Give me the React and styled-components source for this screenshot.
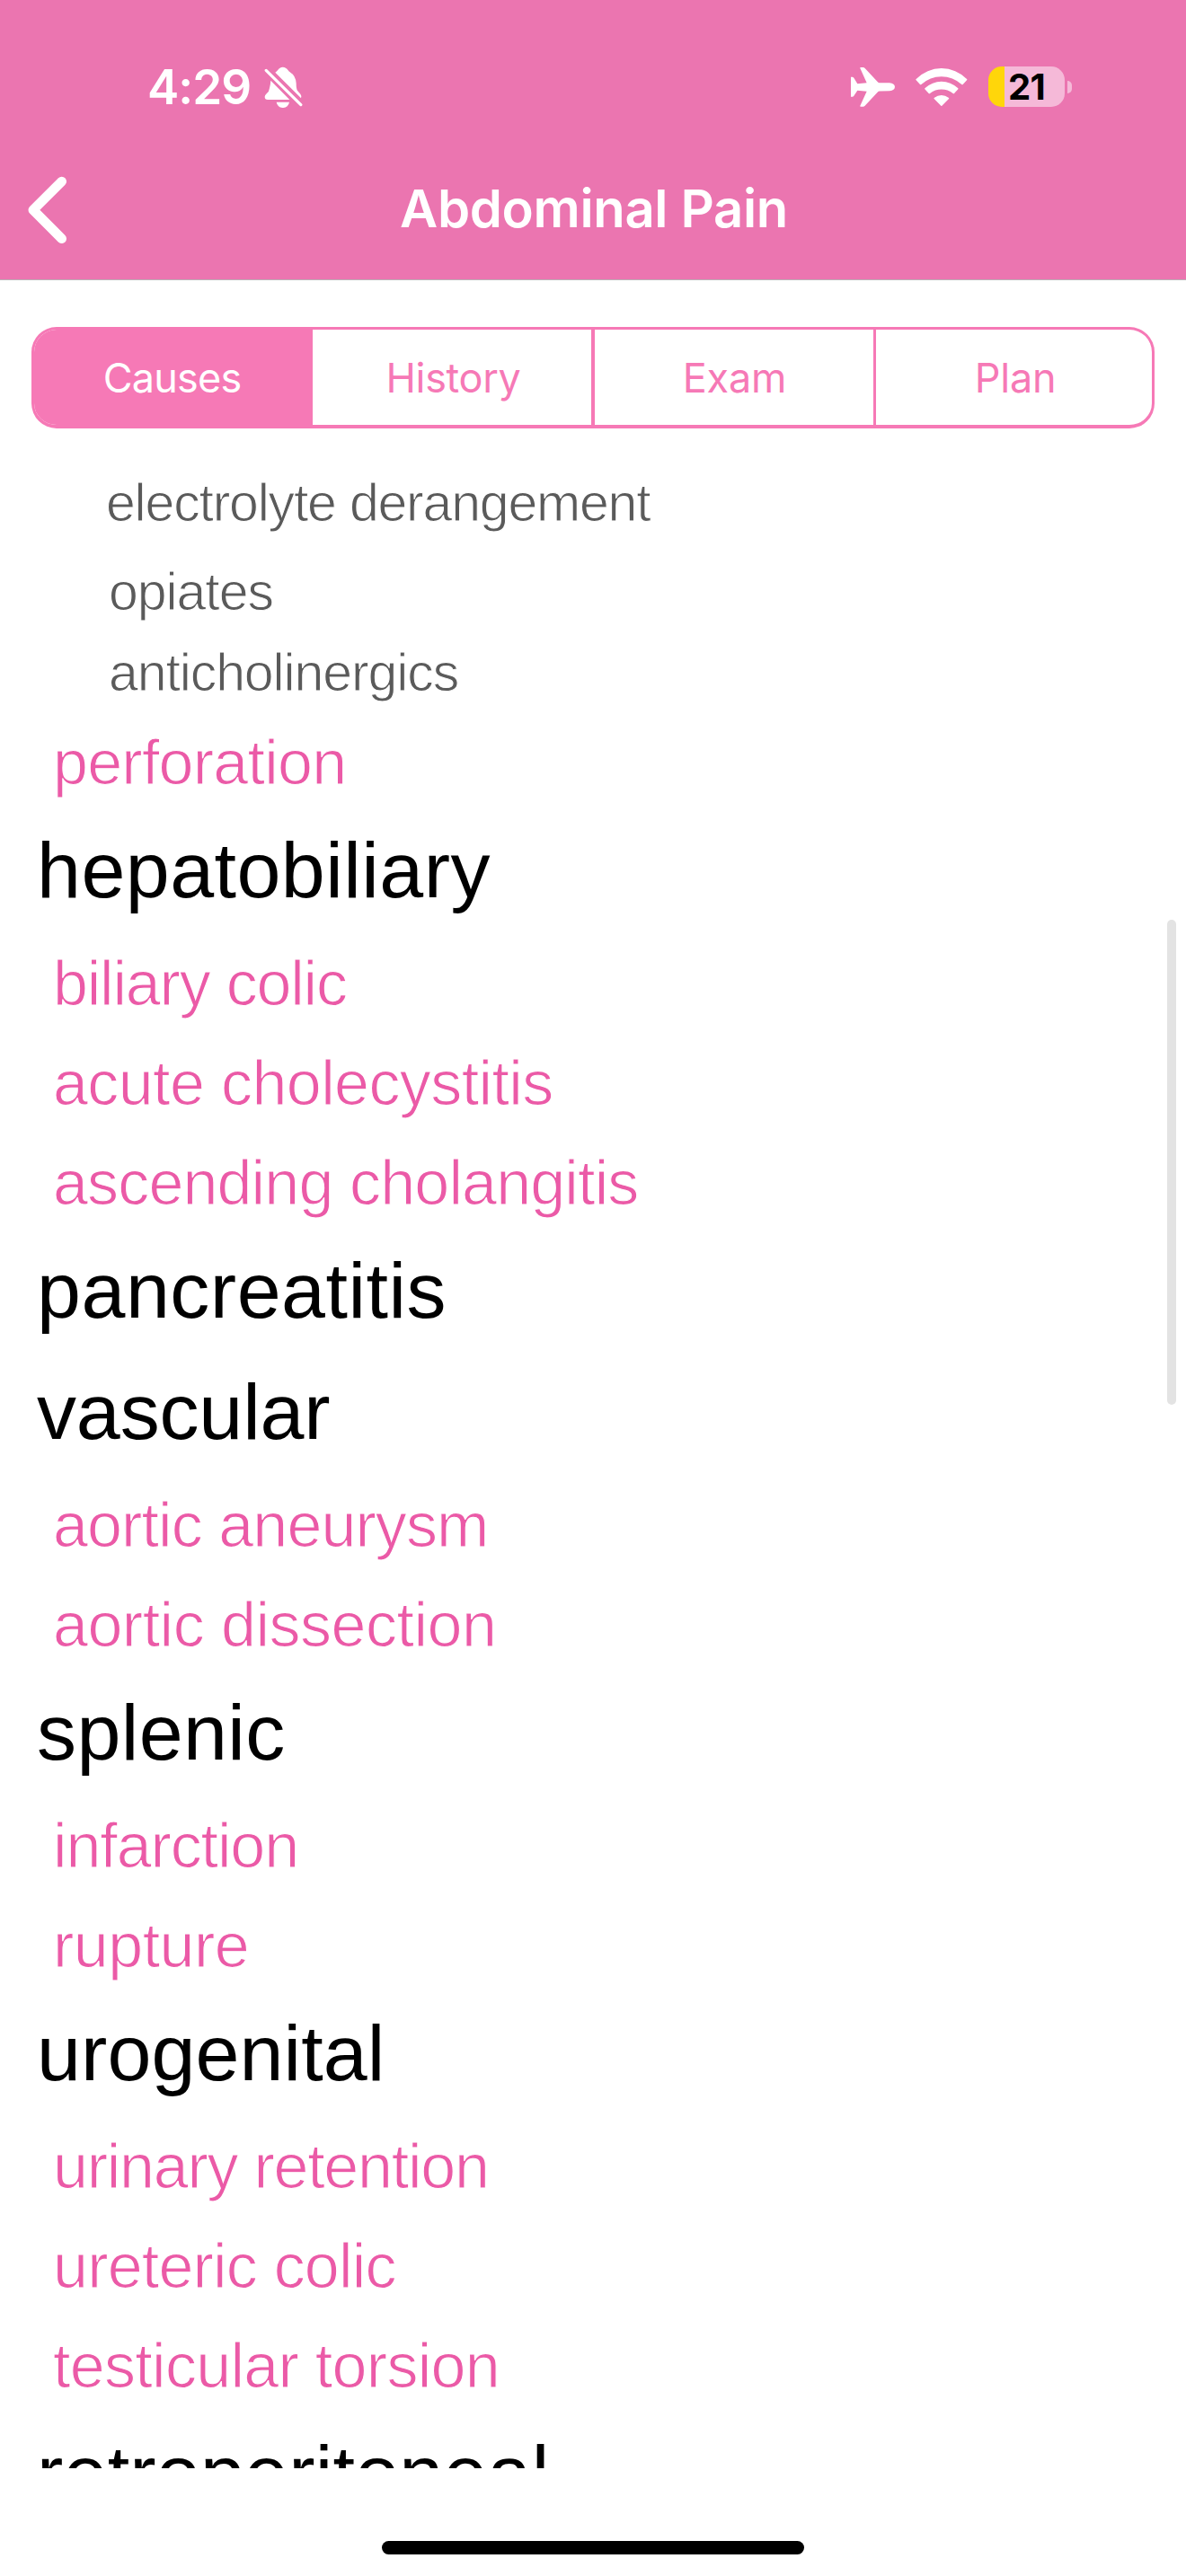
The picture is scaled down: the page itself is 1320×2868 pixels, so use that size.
import React from "react";
import styled, { createGlobalStyle } from "styled-components";

const GlobalStyle = createGlobalStyle`
  *, *::before, *::after { box-sizing: border-box; }
  html, body { margin: 0; padding: 0; background: #ffffff; }
`;

const Screen = styled.div`
  position: relative;
  display: flex;
  flex-direction: column;
  width: 1320px;
  height: 2868px;
  overflow: hidden;
  background: #ffffff;
  font-family: "Inter", "Liberation Sans", sans-serif;
`;

const Header = styled.header`
  flex: none;
  height: 312px;
  background: #eb75b0;
  border-bottom: 1px solid #b9b2b6;
`;

const StatusBar = styled.div`
  display: flex;
  align-items: center;
  justify-content: space-between;
  height: 156px;
  padding: 38px 127px 0 164px;
`;

const StatusGroup = styled.div`
  display: flex;
  align-items: center;
  gap: ${(p) => p.$gap}px;
`;

const Clock = styled.span`
  width: 115px;
  font-size: 53px;
  font-weight: 600;
  line-height: 60px;
  letter-spacing: ${(p) => p.$track || 0}px;
  color: #ffffff;
  white-space: nowrap;
`;

const Icon = styled.svg`
  display: block;
  flex: none;
  width: ${(p) => p.$w}px;
  height: ${(p) => p.$h}px;
  fill: #ffffff;
`;

const Battery = styled.div`
  display: flex;
  align-items: center;
  gap: 3px;
`;

const BatteryBody = styled.div`
  display: flex;
  align-items: center;
  justify-content: center;
  width: 85px;
  height: 45px;
  border-radius: 15px;
  background: linear-gradient(to right, #ffd60a 18px, #f5b9d8 18px);
  color: #000000;
  font-size: 40px;
  font-weight: 700;
  line-height: 45px;
  letter-spacing: -0.8px;
`;

const BatteryCap = styled.div`
  width: 5px;
  height: 14px;
  border-radius: 0 7px 7px 0;
  background: #f5b9d8;
`;

const NavBar = styled.nav`
  display: grid;
  grid-template-columns: 161px 1fr 159px;
  align-items: center;
  height: 155px;
`;

const BackButton = styled.button`
  display: flex;
  align-items: center;
  height: 155px;
  padding: 0 0 0 30px;
  border: 0;
  background: none;
`;

const Title = styled.h1`
  margin: 0;
  padding-bottom: 3px;
  font-size: 58px;
  font-weight: 600;
  line-height: 72px;
  letter-spacing: -0.35px;
  text-align: center;
  color: #ffffff;
  white-space: nowrap;
`;

const Segments = styled.div`
  flex: none;
  display: grid;
  grid-template-columns: 310px 314px 313px 307px;
  height: 113px;
  margin: 52px 35px 0;
  border: 3px solid #f679b6;
  border-bottom-width: 4px;
  border-radius: 28px;
  overflow: hidden;
`;

const Segment = styled.button`
  padding: ${(p) => (p.$nudge > 0 ? `0 0 0 ${p.$nudge}px` : `0 ${-p.$nudge || 0}px 0 0`)};
  border: 0;
  border-right: ${(p) => p.$divider || 0}px solid #f679b6;
  background: ${(p) => (p.$active ? "#f679b6" : "transparent")};
  color: ${(p) => (p.$active ? "#ffffff" : "#f679b6")};
  font-family: inherit;
  font-size: 45px;
  font-weight: 400;
  line-height: 108px;
  letter-spacing: ${(p) => p.$track || 0}px;
`;

const ScrollArea = styled.main`
  position: relative;
  flex: none;
  height: 2271px;
  padding-top: 38px;
  overflow: hidden;
  font-family: "Liberation Sans", Arial, sans-serif;
`;

const List = styled.ul`
  margin: 0;
  padding: 0;
  list-style: none;
`;

const Row = styled.li`
  letter-spacing: ${(p) => p.$track}px;
  white-space: nowrap;
`;

const HeadingRow = styled(Row)`
  padding: 0 0 8px 41px;
  font-size: 88px;
  line-height: 127px;
  color: #000000;
`;

const TopicRow = styled(Row)`
  padding-left: 59px;
  font-size: 70px;
  line-height: 111px;
  color: #eb5aa7;
  -webkit-text-stroke: 1.1px #ffffff;
`;

const DetailRow = styled(Row)`
  padding-left: ${(p) => p.$indent || 121}px;
  margin-bottom: ${(p) => p.$after || 0}px;
  font-size: 59px;
  line-height: 90px;
  color: #5a5a5a;
  -webkit-text-stroke: 1px #ffffff;
`;

const ScrollThumb = styled.div`
  position: absolute;
  top: 547px;
  right: 11px;
  width: 10px;
  height: 540px;
  border-radius: 5px;
  background: #e3e3e3;
`;

const HomeIndicator = styled.div`
  flex: none;
  width: 470px;
  height: 15px;
  margin: 81px auto 0;
  border-radius: 8px;
  background: #000000;
`;

const rowKinds = { heading: HeadingRow, topic: TopicRow, detail: DetailRow };

const rows = [
  { kind: "detail", text: "electrolyte derangement", track: -1.2, indent: 118, after: 9 },
  { kind: "detail", text: "opiates", track: -1.05 },
  { kind: "detail", text: "anticholinergics", track: -1.1 },
  { kind: "topic", text: "perforation", track: -0.75 },
  { kind: "heading", text: "hepatobiliary", track: 0.45 },
  { kind: "topic", text: "biliary colic", track: -1.2 },
  { kind: "topic", text: "acute cholecystitis", track: -0.6 },
  { kind: "topic", text: "ascending cholangitis", track: -0.85 },
  { kind: "heading", text: "pancreatitis", track: 0.5 },
  { kind: "heading", text: "vascular", track: -0.15 },
  { kind: "topic", text: "aortic aneurysm", track: -0.9 },
  { kind: "topic", text: "aortic dissection", track: -0.5 },
  { kind: "heading", text: "splenic", track: 0.4 },
  { kind: "topic", text: "infarction", track: -1.1 },
  { kind: "topic", text: "rupture", track: -0.5 },
  { kind: "heading", text: "urogenital", track: 0.1 },
  { kind: "topic", text: "urinary retention", track: -1.25 },
  { kind: "topic", text: "ureteric colic", track: -0.8 },
  { kind: "topic", text: "testicular torsion", track: -0.7 },
  { kind: "heading", text: "retroperitoneal", track: 0.2 },
];

const segments = [
  { label: "Causes", active: true, track: -0.8, nudge: -3 },
  { label: "History", divider: 4, track: -0.3, nudge: 3 },
  { label: "Exam", divider: 3, track: -0.2, nudge: 1 },
  { label: "Plan", track: -0.2, nudge: 3 },
];

function BellOff() {
  return (
    <Icon viewBox="880 104 129 140" $w={43} $h={46.7} aria-hidden="true">
      <path d="M917 124 Q922 121 925 117 Q932 106 942 106 Q953 106 960 117 Q962 121 968 124 Q985 134 987 160 Q987 180 992 186 L1001 196 Q1007 204 1003 210 Z" />
      <path d="M902 151 L965 215 H892 Q882 215 882 205 Q882 200 888 195 Q897 188 898 176 Q901 165 902 151 Z" />
      <path d="M921 223 H964 Q960 242 942.500 242 Q925 242 921 223 Z" />
      <path d="M886.500 117 L1002.500 232" stroke="#ffffff" strokeWidth="9.500" strokeLinecap="round" />
    </Icon>
  );
}

function Airplane() {
  return (
    <Icon viewBox="141 106 148 136" $w={49.3} $h={45.3} aria-hidden="true">
      <path d="M270 161 Q288 163 288 174.500 Q288 186 270 188 L237 188.500 Q233 189 230 192 L188 237 Q185 240 182 240 H174 Q171 240 172 237 L194 189 L163 186 L151 204 Q149 207 146 207 H141 V141 H146 Q149 141 151 144 L163 164 L194 161 L172 112 Q171 109 174 109 H182 Q185 109 188 112 L230 157 Q233 161 237 161 Z" />
    </Icon>
  );
}

function Wifi() {
  return (
    <Icon viewBox="359 105 173 128" $w={57.7} $h={42.7} aria-hidden="true">
      <path d="M361 145 Q359 143 361 141 A118 118 0 0 1 530 141 Q532 143 530 145 L517 159 Q515 161 513 159 A99 99 0 0 0 378 159 Q376 161 374 159 Z" />
      <path d="M390 175 Q388 173 391 171 A80 80 0 0 1 500 171 Q503 173 501 175 L488 189 Q486 191 484 189 A62 62 0 0 0 407 189 Q405 191 403 189 Z" />
      <path d="M421 207 Q419 205 422 203 A38 38 0 0 1 469 203 Q472 205 470 207 L447 230 Q445.500 232 444 230 Z" />
    </Icon>
  );
}

function Chevron() {
  return (
    <Icon viewBox="90 468 134 227" $w={44.7} $h={75.7} aria-hidden="true">
      <path
        d="M206 486 L110.500 581 L206 677"
        fill="none"
        stroke="#ffffff"
        strokeWidth="32"
        strokeLinecap="round"
        strokeLinejoin="round"
      />
    </Icon>
  );
}

export default function App() {
  return (
    <>
      <GlobalStyle />
      <Screen>
        <Header>
          <StatusBar>
            <StatusGroup $gap={15}>
              <Clock $track={-1}>4:29</Clock>
              <BellOff />
            </StatusGroup>
            <StatusGroup $gap={23}>
              <Airplane />
              <Wifi />
              <Battery>
                <BatteryBody>21</BatteryBody>
                <BatteryCap />
              </Battery>
            </StatusGroup>
          </StatusBar>
          <NavBar>
            <BackButton aria-label="Back">
              <Chevron />
            </BackButton>
            <Title>Abdominal Pain</Title>
          </NavBar>
        </Header>
        <Segments>
          {segments.map((s) => (
            <Segment
              key={s.label}
              $active={s.active}
              $divider={s.divider}
              $track={s.track}
              $nudge={s.nudge}
            >
              {s.label}
            </Segment>
          ))}
        </Segments>
        <ScrollArea>
          <List>
            {rows.map((r) => {
              const Kind = rowKinds[r.kind];
              return (
                <Kind key={r.text} $track={r.track} $indent={r.indent} $after={r.after}>
                  {r.text}
                </Kind>
              );
            })}
          </List>
          <ScrollThumb />
        </ScrollArea>
        <HomeIndicator />
      </Screen>
    </>
  );
}
